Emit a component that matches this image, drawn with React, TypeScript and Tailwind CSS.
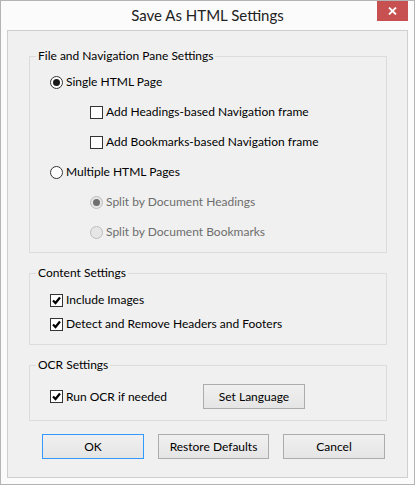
import * as React from "react"

function Radio({ checked, disabled }: { checked?: boolean; disabled?: boolean }) {
  return (
    <span
      className={
        "flex h-[13px] w-[13px] shrink-0 items-center justify-center rounded-full border " +
        (disabled ? "border-[#bcbcbc] bg-[#e6e6e6]" : "border-[#333333] bg-white")
      }
    >
      {checked && (
        <span className={"h-[7px] w-[7px] rounded-full " + (disabled ? "bg-[#6f6f6f]" : "bg-[#1a1a1a]")} />
      )}
    </span>
  )
}

function Checkbox({ checked }: { checked?: boolean }) {
  return (
    <span className="flex h-[13px] w-[13px] shrink-0 items-center justify-center border border-[#333333] bg-white">
      {checked && (
        <svg width="11" height="11" viewBox="0 0 11 11">
          <path d="M2 5.5 L4.5 8 L9 2.5" fill="none" stroke="#000" strokeWidth="2.2" />
        </svg>
      )}
    </span>
  )
}

function Option({
  kind,
  label,
  checked,
  disabled,
  indent,
  height = "h-[30px]",
}: {
  kind: "radio" | "check"
  label: string
  checked?: boolean
  disabled?: boolean
  indent?: boolean
  height?: string
}) {
  return (
    <div className={"flex items-center gap-[3px] " + height + (indent ? " pl-[40px]" : "")}>
      {kind === "radio" ? <Radio checked={checked} disabled={disabled} /> : <Checkbox checked={checked} />}
      <span className={disabled ? "text-[#6d6d6d]" : "text-black"}>{label}</span>
    </div>
  )
}

function Group({ title, className, children }: { title: string; className?: string; children: React.ReactNode }) {
  return (
    <fieldset className={"border border-[#dcdcdc] " + (className ?? "")}>
      <legend className="ml-[6px] px-[2px] leading-[16px]">{title}</legend>
      {children}
    </fieldset>
  )
}

function WinButton({ label, width, primary }: { label: string; width: string; primary?: boolean }) {
  return (
    <button
      className={
        "flex h-[25px] items-center justify-center border bg-linear-to-b from-[#f0f0f0] to-[#e5e5e5] text-black " +
        width +
        (primary ? " border-[#3399ff]" : " border-[#acacac]")
      }
    >
      {label}
    </button>
  )
}

export default function App() {
  const [language] = React.useState("Set Language")

  return (
    <div className="flex h-[485px] w-[415px] flex-col border border-[#b4b4b4] bg-[#fbfbfb] font-['Lato',sans-serif] text-[12px] text-black">
      {/* Title bar */}
      <div className="grid h-[29px] grid-cols-[1fr_auto_1fr]">
        <div />
        <div className="self-center pb-[1px] text-[15px] text-[#222222]">Save As HTML Settings</div>
        <div className="flex justify-end pr-[6px]">
          <div className="flex h-[20px] w-[31px] items-center justify-center bg-[#c75050]">
            <svg width="9" height="8" viewBox="0 0 9 8">
              <path d="M1 0.5 L8 7.5 M8 0.5 L1 7.5" stroke="#fff" strokeWidth="1.8" />
            </svg>
          </div>
        </div>
      </div>

      {/* Client area */}
      <div className="mx-[6px] mb-[6px] flex flex-1 flex-col border border-[#cfcfcf] bg-[#f0f0f0] pl-[21px] pr-[20px] pt-[17px]">
        <Group title="File and Navigation Pane Settings">
          <div className="pl-[20px] pt-[3px] pb-[5px]">
            <Option kind="radio" label="Single HTML Page" checked />
            <Option kind="check" label="Add Headings-based Navigation frame" indent />
            <Option kind="check" label="Add Bookmarks-based Navigation frame" indent />
            <Option kind="radio" label="Multiple HTML Pages" />
            <Option kind="radio" label="Split by Document Headings" checked disabled indent />
            <Option kind="radio" label="Split by Document Bookmarks" disabled indent />
          </div>
        </Group>

        <Group title="Content Settings" className="mt-[12px]">
          <div className="pl-[20px] pt-[7px] pb-[8px]">
            <Option kind="check" label="Include Images" checked height="h-[24px]" />
            <Option kind="check" label="Detect and Remove Headers and Footers" checked height="h-[24px]" />
          </div>
        </Group>

        <Group title="OCR Settings" className="mt-[12px]">
          <div className="grid grid-cols-[153px_auto] items-center pl-[20px] pt-[11px] pb-[11px]">
            <Option kind="check" label="Run OCR if needed" checked height="h-[25px]" />
            <div className="flex">
              <WinButton label={language} width="w-[102px]" />
            </div>
          </div>
        </Group>

        <div className="mt-[13px] flex gap-[14px] pl-[13px]">
          <WinButton label="OK" width="w-[102px]" primary />
          <WinButton label="Restore Defaults" width="w-[111px]" />
          <WinButton label="Cancel" width="w-[102px]" />
        </div>
      </div>
    </div>
  )
}
